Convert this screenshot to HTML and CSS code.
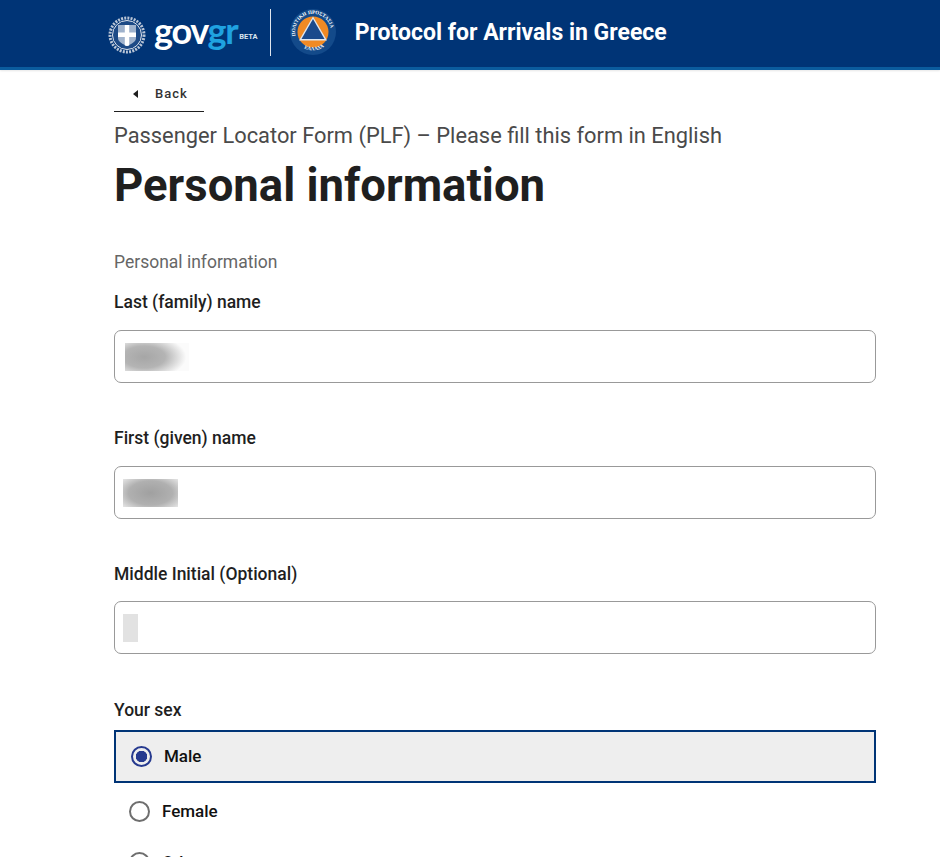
FILE: index.html
```html
<!DOCTYPE html>
<html>

<head>
	<meta charset="utf-8" />
	<title>Protocol for Arrivals in Greece</title>
	<meta name="viewport" content="width=device-width, initial-scale=1" />
	<link rel="stylesheet" href="styles.css">
</head>

<body>
	<header class="site-header">
		<div class="brand">
			<svg class="emblem" width="38" height="38" viewBox="0 0 38 38">
				<circle cx="19" cy="19" r="17" fill="none" stroke="#b9c5d6" stroke-width="3" stroke-dasharray="2 1.200" />
				<circle cx="19" cy="19" r="14.500" fill="#1d4a86" stroke="#dfe5ee" stroke-width="1" />
				<path d="M10 9h18v13c0 4-5 6-9 8-4-2-9-4-9-8z" fill="#9fb2cc" />
				<path d="M16.800 9h4.400v7.600H28v4.400h-6.800v8.600c-.8.400-1.500.4-2.200.4-.7 0-1.400 0-2.200-.4V21H10v-4.400h6.800z" fill="#ffffff" />
			</svg>
			<span class="wordmark">gov<em>gr</em></span>
			<span class="beta">BETA</span>
			<span class="divider"></span>
			<svg class="civil" width="46" height="46" viewBox="0 0 46 46">
				<defs>
					<path id="arc-top" d="M5.500 27a18 18 0 1 1 35 0" />
					<path id="arc-bottom" d="M10 36a18.500 18.500 0 0 0 26 0" />
				</defs>
				<circle cx="23" cy="23" r="23" fill="#134a8a" />
				<circle cx="23" cy="23" r="15.500" fill="#f08a24" />
				<path d="M23 7.500 37 31.500H9z" fill="#dfe7f0" />
				<path d="M23 10 34.500 30h-23z" fill="#1a4a8c" />
				<text class="civil-text"><textPath href="#arc-top">ΠΟΛΙΤΙΚΗ ΠΡΟΣΤΑΣΙΑ</textPath></text>
				<text class="civil-text"><textPath href="#arc-bottom" startOffset="18%">ΕΛΛΑΔΑ</textPath></text>
			</svg>
			<span class="site-title">Protocol for Arrivals in Greece</span>
		</div>
	</header>

	<main class="page">
		<a class="back" href="#"><span class="back-arrow"></span>Back</a>
		<p class="form-name">Passenger Locator Form (PLF) – Please fill this form in English</p>
		<h1>Personal information</h1>
		<p class="caption">Personal information</p>

		<div class="field">
			<label>Last (family) name</label>
			<div class="input"><span class="smudge smudge-last"></span></div>
		</div>
		<div class="field">
			<label>First (given) name</label>
			<div class="input"><span class="smudge smudge-first"></span></div>
		</div>
		<div class="field">
			<label>Middle Initial (Optional)</label>
			<div class="input input-tall"><span class="smudge smudge-middle"></span></div>
		</div>

		<div class="field">
			<label class="radio-label">Your sex</label>
			<div class="radio is-selected"><span class="dot"></span><span class="radio-text">Male</span></div>
			<div class="radio"><span class="dot"></span>Female</div>
			<div class="radio radio-last"><span class="dot"></span>Other</div>
		</div>
	</main>
</body>

</html>
```

FILE: styles.css
```css
* {
	box-sizing: border-box;
}

html,
body {
	height: 857px;
	overflow: hidden;
}

body {
	margin: 0;
	background-color: #ffffff;
	color: #1f1f1f;
	font-family: 'Roboto', 'Liberation Sans', sans-serif;
}

.site-header {
	height: 70px;
	padding-left: 108px;
	background-color: #003476;
	border-bottom: 3px solid #0b5c9e;
	box-shadow: 0 1px 2px rgba(0, 0, 0, 0.1);
}

.brand {
	display: flex;
	align-items: center;
	height: 64px;
}

.emblem {
	margin-top: 6px;
}

.wordmark {
	margin-left: 8px;
	margin-top: -4px;
	font-family: 'Lato', sans-serif;
	font-size: 36px;
	font-weight: 700;
	letter-spacing: -1.300px;
	color: #ffffff;
}

.wordmark em {
	font-style: normal;
	color: #1fa2e0;
}

.beta {
	margin: 8px 0 0 2px;
	font-size: 7.500px;
	font-weight: 700;
	color: #dbe4ef;
}

.divider {
	width: 1px;
	height: 47px;
	margin: 0 19px 0 12px;
	background-color: #dfe5ee;
}

.civil-text {
	font-family: 'Liberation Serif', serif;
	font-size: 5px;
	font-weight: 700;
	fill: #ffffff;
}

.site-title {
	margin-left: 19px;
	font-size: 23px;
	font-weight: 700;
	color: #ffffff;
}

.page {
	padding-left: 114px;
	width: 876px;
}

.back {
	display: flex;
	align-items: center;
	width: 90px;
	height: 42px;
	padding: 6px 0 0 19px;
	border-bottom: 1px solid #1f1f1f;
	color: #333333;
	font-size: 13px;
	font-weight: 500;
	letter-spacing: 1px;
	text-decoration: none;
}

.back-arrow {
	width: 0;
	height: 0;
	margin-right: 17px;
	border-top: 4px solid transparent;
	border-bottom: 4px solid transparent;
	border-right: 5px solid #1f1f1f;
}

.form-name {
	margin: 10px 0 0 0;
	font-size: 21.850px;
	line-height: 28px;
	color: #4a4a4a;
}

h1 {
	margin: 6px 0 0 0;
	font-size: 45.500px;
	line-height: 60px;
	font-weight: 700;
	color: #1f1f1f;
}

.caption {
	margin: 34px 0 0 0;
	font-size: 17.500px;
	line-height: 24px;
	color: #666666;
}

.field {
	margin-top: 16px;
}

.field + .field {
	margin-top: 43px;
}

.field label {
	display: block;
	font-size: 17.500px;
	font-weight: 500;
	line-height: 24px;
}

.input {
	display: flex;
	align-items: center;
	height: 53px;
	margin-top: 16px;
	padding-left: 10px;
	border: 1px solid #999999;
	border-radius: 7px;
	background-color: #ffffff;
}

.input-tall {
	margin-top: 15px;
	margin-bottom: 44px;
}

/* blurred-out values */
.smudge {
	display: block;
	height: 28px;
}

.smudge-last {
	width: 64px;
	background: radial-gradient(ellipse 42px 22px at 30% 50%, #a6a6a6 0%, #b4b4b4 50%, #fbfbfb 100%);
}

.smudge-first {
	width: 55px;
	margin-left: -2px;
	background: radial-gradient(ellipse 40px 22px at 50% 50%, #a0a0a0 0%, #b0b0b0 55%, #eeeeee 100%);
}

.smudge-middle {
	width: 15px;
	margin-left: -2px;
	background-color: #e2e2e2;
}

.radio-label.radio-label {
	margin-bottom: 8px;
}

.radio {
	display: flex;
	align-items: center;
	height: 52px;
	padding-left: 15px;
	font-size: 17px;
	font-weight: 500;
	color: #111111;
}

.radio.is-selected {
	height: 53px;
	margin-bottom: 2px;
	padding-left: 15px;
	border: 2px solid #003476;
	background-color: #eeeeee;
}

.radio-text {
	margin-top: -2px;
}

.radio-last {
	margin-top: -1px;
}

.dot {
	width: 21px;
	height: 21px;
	margin-right: 12px;
	border: 2px solid #6e6e6e;
	border-radius: 50%;
	background-color: #ffffff;
}

.is-selected .dot {
	border-color: #263a8f;
	background: radial-gradient(circle, #263a8f 0, #263a8f 5.500px, #eeeeee 6px);
}
```
